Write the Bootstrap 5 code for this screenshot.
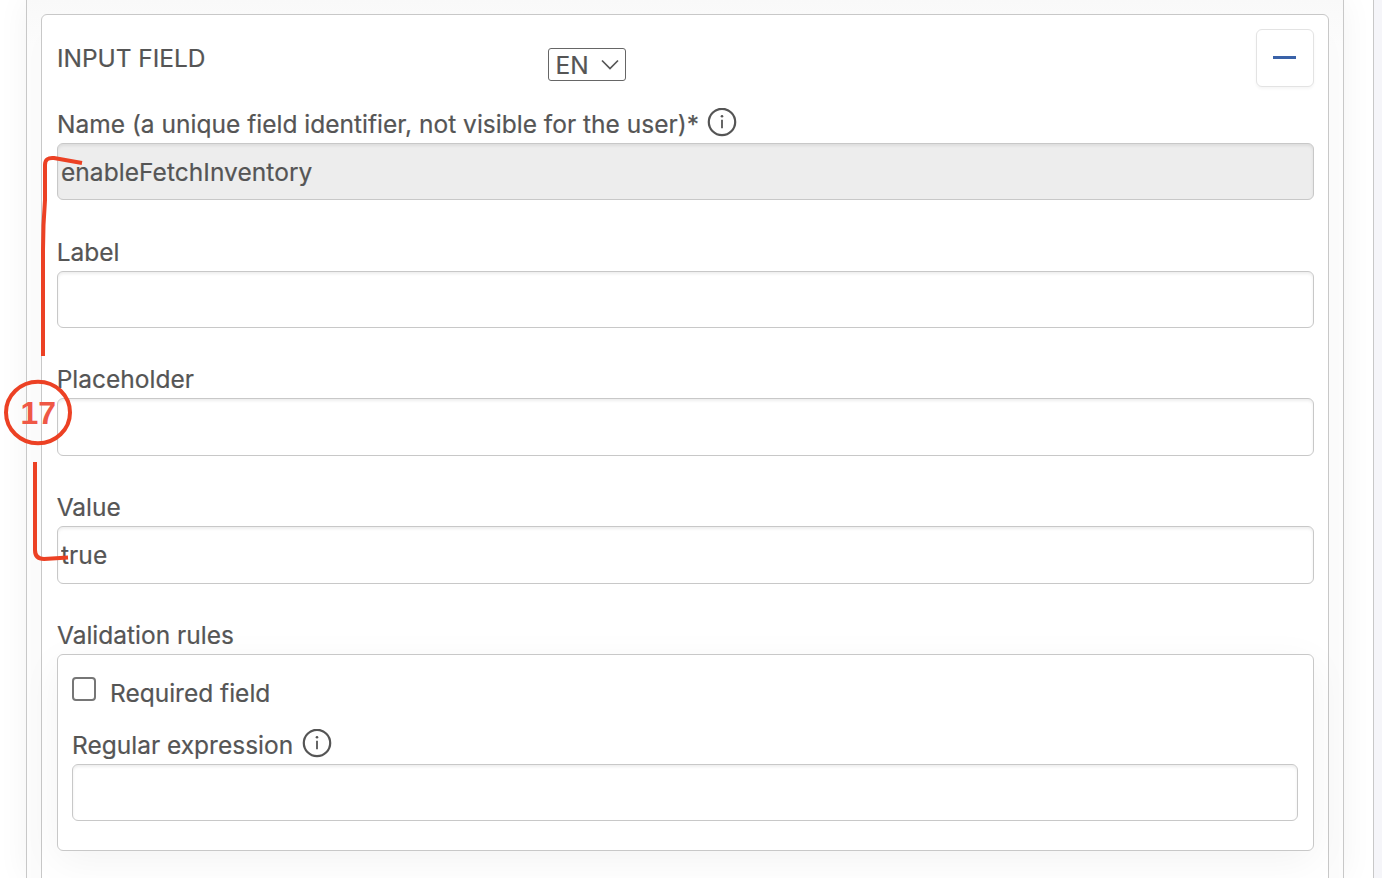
<!DOCTYPE html>
<html lang="en">
<head>
<meta charset="utf-8">
<meta name="viewport" content="width=device-width, initial-scale=1">
<title>Input field</title>
<link href="https://cdn.jsdelivr.net/npm/bootstrap@5.3.0/dist/css/bootstrap.min.css" rel="stylesheet">
<style>
body{height:878px;background:#f5f5f9;color:#555;font-family:Inter,"Liberation Sans",sans-serif;font-size:24.5px;line-height:30px;-webkit-text-stroke:.2px #555}
.page{width:1374px;height:878px;border-right:1px solid #c8c8c8;padding:0 29px 0 26px}
.outer-panel{height:878px;border:solid #c8c8c8;border-width:0 1px;padding:14px 14px 0;box-shadow:0 0 30px rgba(0,0,0,.05);background:linear-gradient(#f9f9f9,#fcfcfc 45px)}
.field-panel{height:900px;border:1px solid #c8c8c8;border-radius:6px;padding:14px 14px 0 15px;box-shadow:0 20px 30px rgba(0,0,0,.015)}
.head-row{height:58px}
.head-title{width:491px;padding-top:14px;letter-spacing:-.05px}
.lang{width:78px;height:33px;margin-top:19px;border:1px solid #666;border-radius:3px;padding:0 5px 0 6.5px}
.collapse-btn{width:58px;height:58px;border:1px solid #e3e3e3;border-radius:6px;box-shadow:0 2px 3px rgba(0,0,0,.04)}
.collapse-btn i{width:23px;height:3px;margin:-1px 1px 0 0;background:#3a62a8}
.caption{height:37px;padding-top:3px;white-space:nowrap}
.group{height:128px}
.group-first{padding-top:19px}
.name-text{letter-spacing:.01px}
.entry{height:57px;border:1px solid #c8c8c8;border-radius:6px;padding:0 3px;color:#555;background:#fff;box-shadow:inset 0 2px 3px rgba(0,0,0,.07);outline:0;font:inherit;letter-spacing:.05px}
.entry-tall{height:58px}
.entry:disabled{background:#ededed;opacity:1;-webkit-text-fill-color:#555}
.group .caption{margin-left:-.3px}
.lift{height:127px}
.rules-title{padding-top:33px}
.rules{height:197px;border:1px solid #c8c8c8;border-radius:6px;padding:14px 15px 0 14px;box-shadow:0 10px 40px rgba(0,0,0,.05)}
.tick{width:24px;height:24px;appearance:none;border:2px solid #767676;border-radius:4px;margin:8px 14px 0 0;background:#fff}
.required{padding-top:9px}
.regex{margin-top:18.6px}
.info{width:30px;height:30px;margin:-1px 0 0 8.5px}
.notes{left:0;top:0;pointer-events:none;-webkit-text-stroke:0}
</style>
</head>
<body class="overflow-hidden">
<main class="page bg-white overflow-hidden position-relative">
<section class="outer-panel">
<div class="field-panel bg-white">
  <header class="head-row d-flex">
    <div class="head-title">INPUT FIELD</div>
    <div class="lang d-flex align-items-center justify-content-between"><span>EN</span>
      <svg width="20" height="14" viewBox="0 0 20 14" fill="none" stroke="#555" stroke-width="1.7"><path d="M2 2.500l8 8 8-8"/></svg></div>
    <button class="collapse-btn bg-white ms-auto p-0 d-flex align-items-center justify-content-center" aria-label="Collapse"><i></i></button>
  </header>
  <div class="group-first">
    <div class="caption d-flex"><span class="name-text">Name (a unique field identifier, not visible for the user)*</span>
      <svg class="info" viewBox="0 0 30 30" fill="none" stroke="#555" stroke-width="2.2"><circle cx="15" cy="14" r="13.2"/><path d="M15 11.800v8.500" stroke-width="1.8"/><circle cx="15" cy="8.300" r="1.3" fill="#555" stroke="none"/></svg></div>
    <input class="entry w-100 d-block" value="enableFetchInventory" disabled>
  </div>
  <div class="group d-flex flex-column justify-content-end"><label class="caption" for="label">Label</label><input id="label" class="entry w-100"></div>
  <div class="group d-flex flex-column justify-content-end"><label class="caption" for="placeholder">Placeholder</label><input id="placeholder" class="entry entry-tall w-100"></div>
  <div class="group d-flex flex-column justify-content-end"><label class="caption" for="value">Value</label><input id="value" class="entry entry-tall w-100" value="true"></div>
  <div class="rules-title"><div class="caption">Validation rules</div></div>
  <div class="rules bg-white">
    <label class="d-flex"><input type="checkbox" class="tick"><span class="required">Required field</span></label>
    <div class="caption regex d-flex"><span>Regular expression</span>
      <svg class="info" viewBox="0 0 30 30" fill="none" stroke="#555" stroke-width="2.2"><circle cx="15" cy="14" r="13.2"/><path d="M15 11.800v8.500" stroke-width="1.8"/><circle cx="15" cy="8.300" r="1.3" fill="#555" stroke="none"/></svg></div>
    <input class="entry w-100 d-block">
  </div>
</div>
</section>
<svg class="notes position-absolute" width="100" height="600" fill="none" stroke="#ec4124" stroke-width="4"><path d="M82 163L54 158Q45 157 45 165L45 200Q43 225 43 250V356"/><ellipse cx="38" cy="412.500" rx="32" ry="30.800"/><path d="M35 462V550Q35 559 44 559L68 557.500"/><text x="20.500" y="423.800" font-family="Liberation Sans" font-weight="bold" font-size="32" fill="#ef5846" stroke="none">17</text></svg>
</main>
<script src="https://cdn.jsdelivr.net/npm/bootstrap@5.3.0/dist/js/bootstrap.bundle.min.js"></script>
</body>
</html>
